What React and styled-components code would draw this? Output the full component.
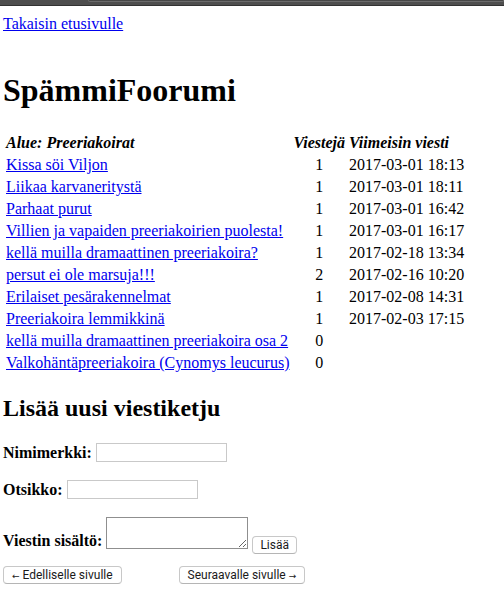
import React from "react";
import styled, { createGlobalStyle } from "styled-components";

const Global = createGlobalStyle`
  html, body { margin: 0; padding: 0; background: #fff; }
  body { font-family: "Liberation Serif", "Times New Roman", serif; font-size: 16px; color: #000; }
`;

const TopBar = styled.div`
  height: 5px;
  background: #4e4e4e;
  border-bottom: 1px solid #323232;
  display: flex;
`;

const BarEdge = styled.div`
  margin-left: 88px;
  width: 414px;
  height: 1px;
  border-bottom: 1px solid #6b6b6b;
  border-left: 1px solid #6b6b6b;
  border-right: 1px solid #6b6b6b;
  border-bottom-left-radius: 3px;
  border-bottom-right-radius: 3px;
  background: #474747;
`;

const Page = styled.div`
  padding: 9px 8px 8px 3px;
`;

const Link = styled.a`
  color: #0000ee;
  text-decoration: underline;
  cursor: pointer;
`;

const BackLine = styled.div`
  height: 18px;
  padding-bottom: 18px;
`;

const Title = styled.h1`
  font-size: 32px;
  font-weight: bold;
  margin: 21px 0 22px;
  line-height: normal;
`;

const Table = styled.table`
  border-spacing: 2px;
  margin-left: 0;
`;

const Th = styled.th`
  font-style: italic;
  font-weight: bold;
  text-align: left;
  padding: 1px;
`;

const Td = styled.td`
  padding: 1px;
  height: 18px;
  text-align: ${(p) => (p.$center ? "center" : "left")};
`;

const SubTitle = styled.h2`
  font-size: 24px;
  font-weight: bold;
  margin: 20px 0 21px;
  line-height: normal;
`;

const FormRow = styled.div`
  display: flex;
  align-items: flex-start;
  margin-bottom: ${(p) => p.$gap}px;
`;

const Label = styled.label`
  font-weight: bold;
  margin-top: ${(p) => p.$top}px;
  margin-right: 4px;
  white-space: nowrap;
`;

const TextInput = styled.input`
  box-sizing: border-box;
  width: 131px;
  height: 19px;
  border: 1px solid #c9c9c9;
  padding: 1px 2px;
  font-size: 13px;
  margin: 0;
  outline: none;
`;

const TextArea = styled.textarea`
  box-sizing: border-box;
  width: 142px;
  height: 32px;
  border: 1px solid #8f8f8f;
  padding: 2px;
  margin: 0 4px 0 0;
  font-size: 13px;
  font-family: "Liberation Mono", monospace;
  resize: both;
  outline: none;
`;

const Button = styled.button`
  box-sizing: border-box;
  height: 18px;
  margin: ${(p) => p.$top || 0}px 0 0 0;
  padding: 0 ${(p) => p.$pad || 7}px;
  background: #fff;
  border: 1px solid #c8c8c8;
  border-bottom-color: #b5b5b5;
  border-radius: 4px;
  font-family: Roboto, "Liberation Sans", Arial, sans-serif;
  font-size: 12px;
  color: #1a1a1a;
  line-height: 16px;
  white-space: nowrap;
  cursor: pointer;
`;

const Arrow = styled.span`
  font-family: "DejaVu Sans", sans-serif;
  font-size: 9px;
`;

const NavRow = styled.div`
  display: flex;
  gap: 57px;
  align-items: flex-start;
`;

const threads = [
  ["Kissa söi Viljon", 1, "2017-03-01 18:13"],
  ["Liikaa karvaneritystä", 1, "2017-03-01 18:11"],
  ["Parhaat purut", 1, "2017-03-01 16:42"],
  ["Villien ja vapaiden preeriakoirien puolesta!", 1, "2017-03-01 16:17"],
  ["kellä muilla dramaattinen preeriakoira?", 1, "2017-02-18 13:34"],
  ["persut ei ole marsuja!!!", 2, "2017-02-16 10:20"],
  ["Erilaiset pesärakennelmat", 1, "2017-02-08 14:31"],
  ["Preeriakoira lemmikkinä", 1, "2017-02-03 17:15"],
  ["kellä muilla dramaattinen preeriakoira osa 2", 0, ""],
  ["Valkohäntäpreeriakoira (Cynomys leucurus)", 0, ""],
];

export default function App() {
  return (
    <>
      <Global />
      <TopBar>
        <BarEdge />
      </TopBar>
      <Page>
        <BackLine>
          <Link href="#">Takaisin etusivulle</Link>
        </BackLine>
        <Title>SpämmiFoorumi</Title>
        <Table>
          <thead>
            <tr>
              <Th>Alue: Preeriakoirat</Th>
              <Th>Viestejä</Th>
              <Th>Viimeisin viesti</Th>
            </tr>
          </thead>
          <tbody>
            {threads.map(([t, n, d]) => (
              <tr key={t}>
                <Td>
                  <Link href="#">{t}</Link>
                </Td>
                <Td $center>{n}</Td>
                <Td>{d}</Td>
              </tr>
            ))}
          </tbody>
        </Table>
        <SubTitle>Lisää uusi viestiketju</SubTitle>
        <FormRow $gap={18}>
          <Label $top={1}>Nimimerkki:</Label>
          <TextInput type="text" />
        </FormRow>
        <FormRow $gap={18}>
          <Label $top={1}>Otsikko:</Label>
          <TextInput type="text" />
        </FormRow>
        <FormRow $gap={12}>
          <Label $top={15}>Viestin sisältö:</Label>
          <TextArea />
          <Button $top={19}>Lisää</Button>
        </FormRow>
        <NavRow>
          <Button $pad={8}>
            <Arrow>←</Arrow> Edelliselle sivulle
          </Button>
          <Button $pad={8}>
            Seuraavalle sivulle <Arrow>→</Arrow>
          </Button>
        </NavRow>
      </Page>
    </>
  );
}
